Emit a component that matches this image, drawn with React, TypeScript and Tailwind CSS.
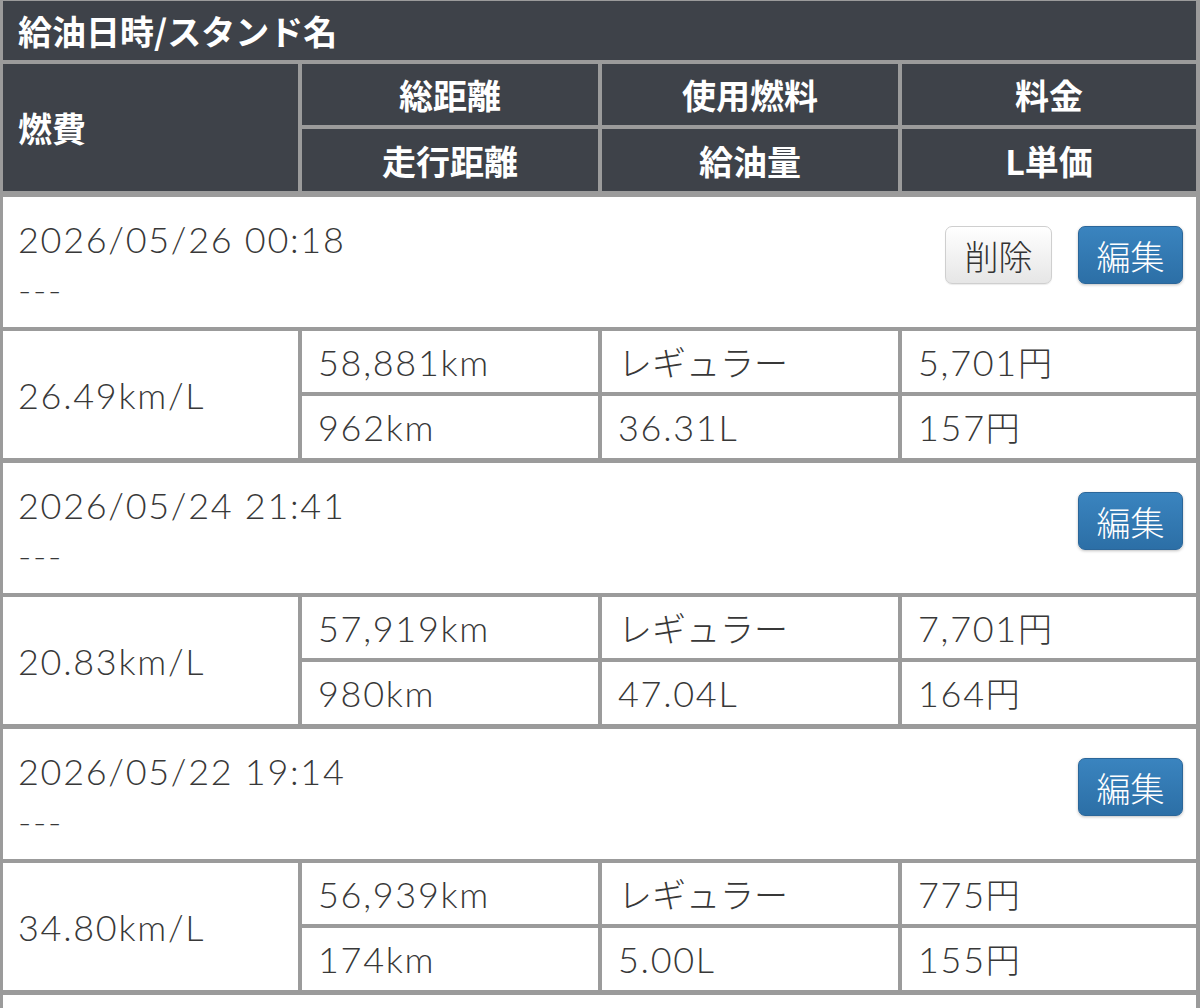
import React from 'react';

type Record = {
  date: string;
  stand: string;
  canDelete: boolean;
  mileage: string;
  total: string;
  fuel: string;
  price: string;
  distance: string;
  liters: string;
  unit: string;
};

const records: Record[] = [
  {
    date: '2026/05/26 00:18',
    stand: '---',
    canDelete: true,
    mileage: '26.49km/L',
    total: '58,881km',
    fuel: 'レギュラー',
    price: '5,701円',
    distance: '962km',
    liters: '36.31L',
    unit: '157円',
  },
  {
    date: '2026/05/24 21:41',
    stand: '---',
    canDelete: false,
    mileage: '20.83km/L',
    total: '57,919km',
    fuel: 'レギュラー',
    price: '7,701円',
    distance: '980km',
    liters: '47.04L',
    unit: '164円',
  },
  {
    date: '2026/05/22 19:14',
    stand: '---',
    canDelete: false,
    mileage: '34.80km/L',
    total: '56,939km',
    fuel: 'レギュラー',
    price: '775円',
    distance: '174km',
    liters: '5.00L',
    unit: '155円',
  },
];

const cols = 'grid grid-cols-[295px_296px_296px_294px] gap-[4px]';

// latin runs use a wider, lighter face so numbers match the iOS rendering
function Txt({ value }: { value: string }) {
  const parts = value.match(/[\x20-\x7e]+|[^\x20-\x7e]+/g) || [];
  return (
    <>
      {parts.map((p, i) =>
        /^[\x20-\x7e]+$/.test(p) ? (
          <span key={i} className="font-['Lato'] font-light text-[36px] tracking-[1.7px]">
            {p}
          </span>
        ) : (
          <span key={i} className="font-light">
            {p}
          </span>
        )
      )}
    </>
  );
}

function HeadCell({ children }: { children: React.ReactNode }) {
  return (
    <div className="bg-[#3e4249] text-white font-bold flex items-center justify-center">
      {children}
    </div>
  );
}

function DataCell({ value }: { value: string }) {
  return (
    <div className="bg-white flex items-center px-[16px] leading-[40px]">
      <Txt value={value} />
    </div>
  );
}

export default function App() {
  return (
    <div
      className="w-[1200px] h-[1008px] overflow-hidden bg-[#9b9b9b] pl-[3px] pr-[4px] pt-[1px] text-[34px] text-[#383838]"
      style={{ fontFamily: '"Noto Sans CJK JP", sans-serif' }}
    >
      {/* Header */}
      <div className="flex flex-col gap-[4px]">
        <div className="h-[59px] bg-[#3e4249] text-white font-bold flex items-center px-[15px]">
          給油日時/スタンド名
        </div>
        <div className={`${cols} grid-rows-[61px_62px]`}>
          <div className="row-span-2 bg-[#3e4249] text-white font-bold flex items-center px-[15px]">
            燃費
          </div>
          <HeadCell>総距離</HeadCell>
          <HeadCell>使用燃料</HeadCell>
          <HeadCell>料金</HeadCell>
          <HeadCell>走行距離</HeadCell>
          <HeadCell>給油量</HeadCell>
          <HeadCell>L単価</HeadCell>
        </div>
      </div>

      {/* Records */}
      <div className="mt-[6px] flex flex-col gap-[5px]">
        {records.map((r) => (
          <div key={r.date} className="flex flex-col gap-[4px]">
            <div className="h-[130px] bg-white flex justify-between pl-[15px] pr-[13px]">
              <div className="pt-[17px] leading-[50px]">
                <div>
                  <Txt value={r.date} />
                </div>
                <div>
                  <Txt value={r.stand} />
                </div>
              </div>
              <div className="pt-[29px] flex gap-[26px] items-start">
                {r.canDelete && (
                  <button className="h-[58px] w-[107px] rounded-[7px] border border-[#cfcfcf] bg-gradient-to-b from-white to-[#e6e6e6] text-[#333] text-[34px] font-light shadow-[0_1px_1px_rgba(0,0,0,0.08)]">
                    削除
                  </button>
                )}
                <button className="h-[58px] w-[105px] rounded-[7px] border border-[#2b6699] bg-gradient-to-b from-[#3a84bf] to-[#2c6fa6] text-white text-[34px] font-light shadow-[0_1px_3px_rgba(0,0,0,0.25)]">
                  編集
                </button>
              </div>
            </div>
            <div className={`${cols} grid-rows-[61px_62px]`}>
              <div className="row-span-2 bg-white flex items-center px-[15px] leading-[40px]">
                <Txt value={r.mileage} />
              </div>
              <DataCell value={r.total} />
              <DataCell value={r.fuel} />
              <DataCell value={r.price} />
              <DataCell value={r.distance} />
              <DataCell value={r.liters} />
              <DataCell value={r.unit} />
            </div>
          </div>
        ))}
        <div className="h-[130px] bg-white" />
      </div>
    </div>
  );
}
